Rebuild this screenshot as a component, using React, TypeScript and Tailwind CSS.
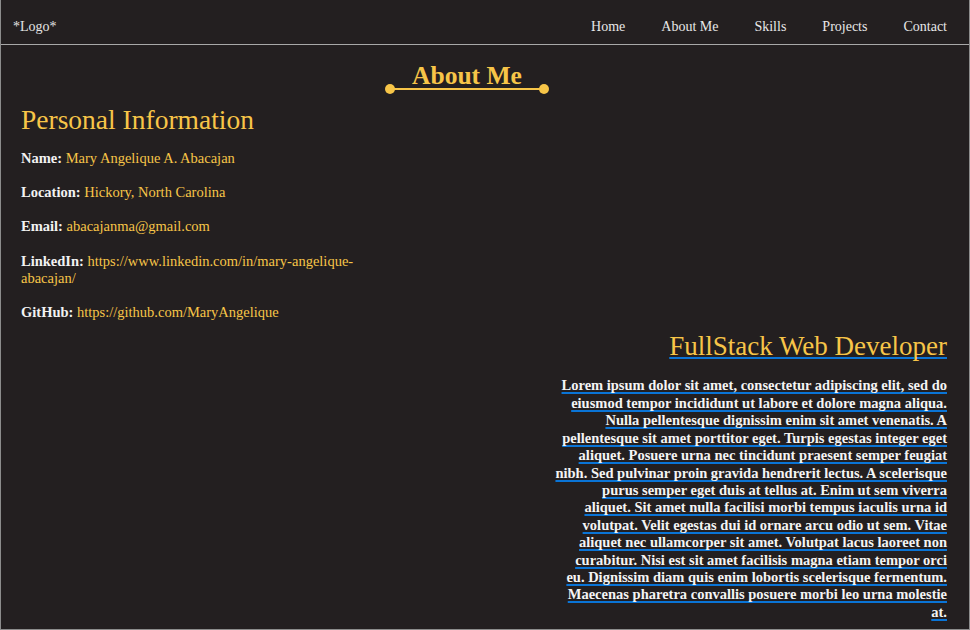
import React from 'react'

const navLinks = ['Home', 'About Me', 'Skills', 'Projects', 'Contact']

const info = [
  { label: 'Name:', value: ['Mary Angelique A. Abacajan'] },
  { label: 'Location:', value: ['Hickory, North Carolina'] },
  { label: 'Email:', value: ['abacajanma@gmail.com'] },
  { label: 'LinkedIn:', value: ['https://www.linkedin.com/in/mary-angelique-', 'abacajan/'] },
  { label: 'GitHub:', value: ['https://github.com/MaryAngelique'] },
]

const bio = [
  'Lorem ipsum dolor sit amet, consectetur adipiscing elit, sed do',
  'eiusmod tempor incididunt ut labore et dolore magna aliqua.',
  'Nulla pellentesque dignissim enim sit amet venenatis. A',
  'pellentesque sit amet porttitor eget. Turpis egestas integer eget',
  'aliquet. Posuere urna nec tincidunt praesent semper feugiat',
  'nibh. Sed pulvinar proin gravida hendrerit lectus. A scelerisque',
  'purus semper eget duis at tellus at. Enim ut sem viverra',
  'aliquet. Sit amet nulla facilisi morbi tempus iaculis urna id',
  'volutpat. Velit egestas dui id ornare arcu odio ut sem. Vitae',
  'aliquet nec ullamcorper sit amet. Volutpat lacus laoreet non',
  'curabitur. Nisi est sit amet facilisis magna etiam tempor orci',
  'eu. Dignissim diam quis enim lobortis scelerisque fermentum.',
  'Maecenas pharetra convallis posuere morbi leo urna molestie',
  'at.',
]

const App = () => {
  return (
    <div className="w-[970px] h-[630px] overflow-hidden bg-[#231f20] border-x border-b border-[#8c8c8c] font-['Liberation_Serif',serif]">
      {/* Navbar */}
      <nav className="h-[45px] flex items-start justify-between pt-[18px] pl-[12px] pr-[22px] border-b border-[#a8a8a8]">
        <p className="text-[14px] leading-[17px] text-[#e4e4e4]">*Logo*</p>
        <ul className="flex gap-[36px]">
          {navLinks.map((link) => (
            <li key={link} className="text-[14px] leading-[17px] text-[#e8e8e8]">
              {link}
            </li>
          ))}
        </ul>
      </nav>

      {/* Section title */}
      <div className="flex flex-col items-center pr-[36px] mt-[17px]">
        <h1 className="text-[25.5px] leading-[27px] font-bold text-[#f7c548]">About Me</h1>
        <div className="relative w-[164px] h-[10px] -mt-[5px]">
          <div className="absolute left-[5px] right-[5px] top-[4px] h-[2px] bg-[#f7c548]" />
          <div className="absolute left-0 top-0 w-[10px] h-[10px] rounded-full bg-[#f7c548]" />
          <div className="absolute right-0 top-0 w-[10px] h-[10px] rounded-full bg-[#f7c548]" />
        </div>
      </div>

      {/* Personal information */}
      <div className="pl-[20px] w-[385px] mt-[12px]">
        <h2 className="text-[27.5px] leading-[27.5px] text-[#f7c548]">Personal Information</h2>
        <div className="mt-[16px] flex flex-col gap-[17.2px]">
          {info.map((item) => (
            <p key={item.label} className="text-[14.5px] leading-[17.2px]">
              <span className="font-semibold text-[#f2f2f2]">{item.label}</span>{' '}
              {item.value.map((part, i) => (
                <React.Fragment key={i}>
                  {i > 0 && <br />}
                  <span className="text-[#f7c548]">{part}</span>
                </React.Fragment>
              ))}
            </p>
          ))}
        </div>
      </div>

      {/* About text */}
      <div className="ml-auto w-[420px] pr-[22px] mt-[13px] text-right">
        <h2 className="text-[27px] leading-[24px] text-[#f7c548] underline decoration-[#0a74d6] decoration-2 underline-offset-[2px] [text-decoration-skip-ink:none]">
          FullStack Web Developer
        </h2>
        <p className="mt-[19px] text-[14.5px] leading-[17.4px] font-bold text-[#f4f4f4]">
          {bio.map((line, i) => (
            <React.Fragment key={i}>
              <span className="underline decoration-[#0a74d6] decoration-2 underline-offset-[2px] [text-decoration-skip-ink:none]">
                {line}
              </span>
              {i < bio.length - 1 && <br />}
            </React.Fragment>
          ))}
        </p>
      </div>
    </div>
  )
}

export default App
